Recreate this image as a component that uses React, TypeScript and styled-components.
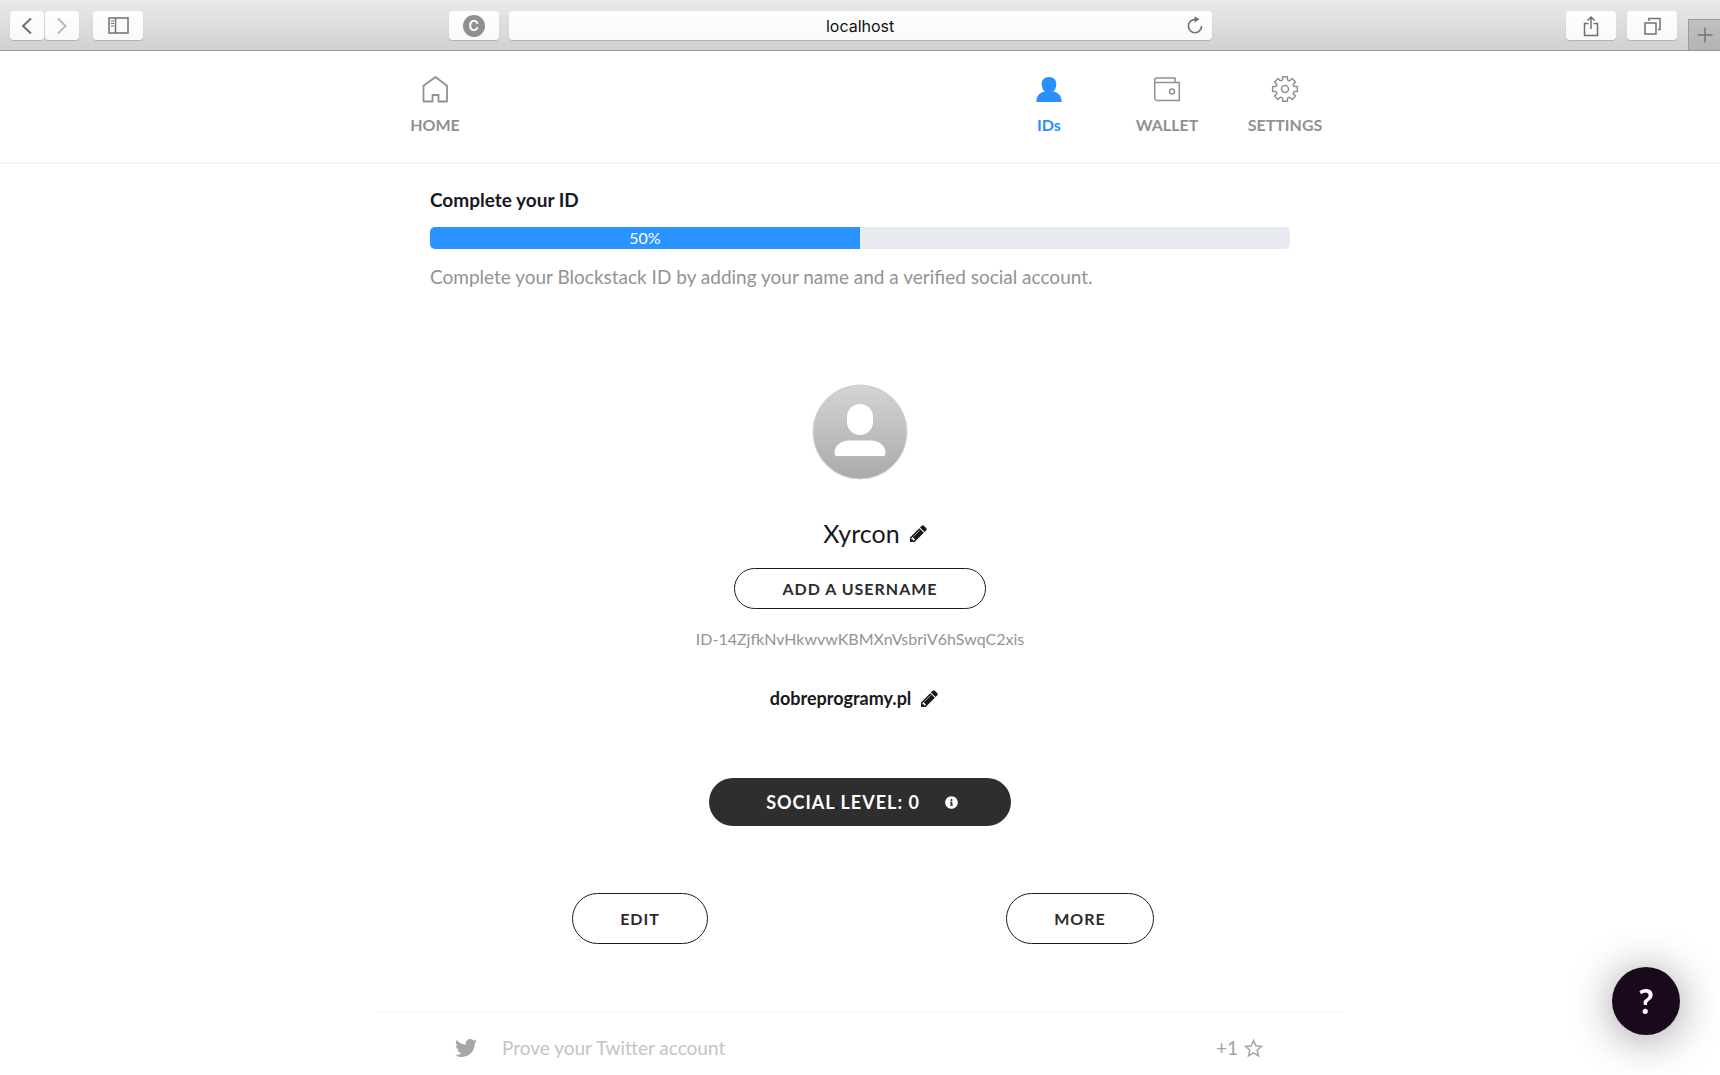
import React from "react";
import styled, { createGlobalStyle, css } from "styled-components";
import { FaTwitter, FaInfoCircle } from "react-icons/fa";

const Global = createGlobalStyle`
  *, *::before, *::after { box-sizing: border-box; }
  body {
    margin: 0;
    background: #fff;
    color: #18191f;
    font-family: Lato, "Open Sans", sans-serif;
    font-size: 16px;
    line-height: 24px;
  }
  button { font: inherit; color: inherit; cursor: pointer; }
  svg { display: block; flex: none; }
`;

/* ---------- browser toolbar ---------- */

const Toolbar = styled.header`
  display: grid;
  grid-template-columns: minmax(0, 45fr) minmax(0, 763px) minmax(0, 51fr);
  height: 51px;
  background: linear-gradient(#e9ebea, #d0d2d1);
  border-bottom: 1px solid #939594;
`;

const ToolGroup = styled.div<{ $gap: number; $end?: boolean }>`
  display: flex;
  align-items: flex-start;
  gap: ${(p) => p.$gap}px;
  padding-top: 11px;
  ${(p) => p.$end && css`justify-content: flex-end;`}
`;

const StartTools = styled(ToolGroup)`
  padding-left: 10px;
`;

const HistoryPair = styled.div`
  display: flex;
  gap: 1px;
`;

const field = css`
  border: 0;
  border-radius: 4px;
  background: linear-gradient(#fdfefd, #f8faf9);
  box-shadow: 0 1px 1px rgba(0, 0, 0, 0.18);
`;

const ToolButton = styled.button<{ $width: number }>`
  ${field}
  display: flex;
  align-items: center;
  justify-content: center;
  flex: none;
  width: ${(p) => p.$width}px;
  height: 29px;
  padding: 0;
  color: #6f7170;
`;

const Address = styled.div`
  position: relative;
  flex: 1;
`;

const AddressInput = styled.input`
  ${field}
  display: block;
  width: 100%;
  height: 29px;
  padding: 1px 32px 0;
  color: #111;
  font-family: Inter, sans-serif;
  font-size: 16px;
  text-align: center;
  outline: 0;
`;

const Reload = styled.button`
  position: absolute;
  top: 4px;
  right: 8px;
  padding: 0;
  border: 0;
  background: none;
  color: #6f7170;
`;

const SiteBadge = styled.span`
  width: 22px;
  height: 22px;
  border-radius: 50%;
  background: #8e908f;
  color: #fff;
  font-family: Inter, sans-serif;
  font-size: 14px;
  font-weight: 600;
  line-height: 22px;
`;

const NewTab = styled.button`
  display: flex;
  align-items: center;
  justify-content: center;
  width: 32px;
  height: 31px;
  margin-top: 8px;
  padding: 0;
  border: solid #9b9d9c;
  border-width: 1px 0 0 1px;
  background: linear-gradient(#bfc1c0, #b3b5b4);
  color: #6f7170;
`;

/* ---------- application navigation ---------- */

const NavBar = styled.nav`
  border-bottom: 2px solid #f4f4f5;
`;

const Container = styled.div`
  width: 100%;
  max-width: 968px;
  margin: 0 auto;
`;

const NavList = styled(Container)`
  display: flex;
  padding: 24px 0 25px;
`;

const NavLink = styled.a<{ $active?: boolean; $first?: boolean }>`
  display: flex;
  flex-direction: column;
  align-items: center;
  gap: 10px;
  width: 118px;
  margin-right: ${(p) => (p.$first ? "auto" : "0")};
  color: ${(p) => (p.$active ? "#2a91fc" : "#8f9193")};
  font-weight: 700;
  text-decoration: none;
`;

/* ---------- profile ---------- */

const Completion = styled(Container)`
  padding: 24px 54px 0;
`;

const Title = styled.h1`
  margin: 0 0 15px;
  font-size: 19px;
  font-weight: 700;
  line-height: 24px;
`;

const Track = styled.div`
  height: 22px;
  border-radius: 5px;
  overflow: hidden;
  background: #e7eaf0;
`;

const Fill = styled.div`
  height: 22px;
  background: #2a93ff;
  color: #fff;
  line-height: 21px;
  text-align: center;
`;

const Hint = styled.p`
  margin: 16px 0 0;
  color: #939393;
  font-size: 19px;
`;

const Profile = styled(Container)`
  display: flex;
  flex-direction: column;
  align-items: center;
  padding-top: 95px;
`;

const NameRow = styled.div`
  display: flex;
  align-items: center;
  gap: 10px;
  margin: 37px 0 19px;
  padding-left: 30px;
`;

const Name = styled.h2`
  margin: 0;
  font-size: 25px;
  font-weight: 400;
  line-height: 32px;
`;

const IconButton = styled.button`
  padding: 0;
  border: 0;
  background: none;
`;

const Outline = styled.button<{ $size: "small" | "large" }>`
  height: ${(p) => (p.$size === "small" ? 41 : 51)}px;
  padding: 0 47px;
  border: 1px solid #1c1c1d;
  border-radius: 26px;
  background: #fff;
  color: #2c2c2d;
  font-weight: 700;
  letter-spacing: 1px;
`;

const Identifier = styled.p`
  margin: 18px 0 0;
  color: #939393;
`;

const Bio = styled.div`
  display: flex;
  align-items: center;
  gap: 10px;
  margin-top: 35px;
  padding-right: 12px;
  font-size: 18px;
  font-weight: 700;
`;

const Level = styled.button`
  display: flex;
  align-items: center;
  gap: 25px;
  height: 48px;
  margin-top: 68px;
  padding: 0 53px 0 57px;
  border: 0;
  border-radius: 24px;
  background: #2e2e2f;
  color: #fff;
  font-size: 18px;
  font-weight: 700;
  letter-spacing: 1px;
`;

const Actions = styled.div`
  display: grid;
  grid-template-columns: 1fr 1fr;
  justify-items: center;
  width: 100%;
  margin-top: 67px;
  padding: 0 44px;
`;

const AccountLink = styled.a`
  display: flex;
  align-items: center;
  width: 100%;
  margin-top: 68px;
  padding: 23px 81px 14px 79px;
  border-top: 1px solid #f6f6f7;
  color: #c3c5c4;
  font-size: 19px;
  text-decoration: none;
`;

const AccountText = styled.span`
  flex: 1;
  padding-left: 25px;
`;

const Points = styled.span`
  display: flex;
  align-items: center;
  gap: 6px;
  color: #a6a8a7;
  font-weight: 500;
`;

const Help = styled.button`
  position: fixed;
  right: 40px;
  bottom: 40px;
  width: 68px;
  height: 68px;
  padding: 0;
  border: 0;
  border-radius: 50%;
  background: #1a081d;
  box-shadow: 0 4px 44px rgba(0, 0, 0, 0.4);
  color: #fff;
  font-size: 34px;
  font-weight: 700;
`;

/* ---------- drawings ---------- */

const Chevron = ({ flip }: { flip?: boolean }) => (
  <svg width="12" height="18" viewBox="0 0 12 18" fill="none" stroke={flip ? "#b9bbba" : "#6f7170"} strokeWidth="2">
    <path d={flip ? "M2 1.5L9.500 9L2 16.5" : "M10 1.5L2 9l8 7.500"} />
  </svg>
);

const SidebarIcon = () => (
  <svg width="21" height="17" viewBox="0 0 21 17" fill="none" stroke="currentColor">
    <path d="M1 1h19v15H1zM7.500 1v15" strokeWidth="1.5" />
    <path d="M3 4h3M3 6.500h3M3 9h3" />
  </svg>
);

const ReloadIcon = () => (
  <svg width="18" height="20" viewBox="0 0 18 20" fill="none" stroke="currentColor" strokeWidth="1.6">
    <path d="M9 4.500a6.600 6.600 0 1 0 6.600 6.600" />
    <path d="M8.500 1.200v6.200l5-3.100z" fill="currentColor" stroke="none" />
  </svg>
);

const ShareIcon = () => (
  <svg width="16" height="22" viewBox="0 0 16 22" fill="none" stroke="currentColor" strokeWidth="1.5">
    <path d="M5.500 8.500h-4v12h13v-12h-4M8 14V2M4.500 5.500L8 2l3.500 3.500" />
  </svg>
);

const TabsIcon = () => (
  <svg width="17" height="18" viewBox="0 0 17 18" fill="none" stroke="currentColor" strokeWidth="1.5">
    <path d="M1 6h11v11H1zM5 4V1.500h11v11h-2" />
  </svg>
);

const PlusIcon = () => (
  <svg width="16" height="16" viewBox="0 0 16 16" stroke="currentColor" strokeWidth="1.4">
    <path d="M8 .5v15M.5 8h15" />
  </svg>
);

const HomeIcon = () => (
  <svg width="28" height="28" viewBox="0 0 28 28" fill="none" stroke="currentColor" strokeWidth="1.8" strokeLinejoin="round">
    <path d="M2.500 10.800L14.500 2l11.500 8.800v15.700h-8.500v-6.500h-6v6.500h-9z" />
  </svg>
);

const PersonIcon = () => (
  <svg width="28" height="28" viewBox="0 0 28 28" fill="currentColor">
    <path d="M14 2c4.700 0 7.300 3 7.300 7 0 3.300-1.200 6-3 7.600 4.700 1 8.200 3.400 8.400 10.400H1.300c.2-7 3.700-9.400 8.400-10.400-1.800-1.600-3-4.300-3-7.600 0-4 2.600-7 7.300-7z" />
  </svg>
);

const WalletIcon = () => (
  <svg width="28" height="28" viewBox="0 0 28 28" fill="none" stroke="currentColor" strokeWidth="1.5">
    <path d="M22 7.500V3H4a2.300 2.300 0 0 0-2.300 2.300v17.400A2.800 2.800 0 0 0 4.500 25.500h21.800v-18H2" />
    <circle cx="19" cy="16.500" r="2.500" />
  </svg>
);

/* Eight square teeth joined by rounded valleys. */
const gear = (() => {
  const at = (angle: number, radius: number) =>
    `${(14 + radius * Math.sin(angle)).toFixed(2)} ${(14 - radius * Math.cos(angle)).toFixed(2)}`;
  let d = "";
  for (let i = 0; i < 8; i++) {
    const t = (i * Math.PI) / 4;
    d += `${i ? "L" : "M"}${at(t - 0.25, 9.8)}L${at(t - 0.19, 12.6)}L${at(t + 0.19, 12.6)}L${at(t + 0.25, 9.8)}`;
    d += `Q${at(t + Math.PI / 8, 8.4)} ${at(t + Math.PI / 4 - 0.25, 9.8)}`;
  }
  return `${d}Z`;
})();

const GearIcon = () => (
  <svg width="28" height="28" viewBox="0 0 28 28" fill="none" stroke="currentColor" strokeWidth="1.5" strokeLinejoin="round">
    <path d={gear} />
    <circle cx="14" cy="14" r="3.500" />
  </svg>
);

const Avatar = () => (
  <svg width="96" height="96" viewBox="0 0 96 96" role="img" aria-label="Profile picture">
    <defs>
      <linearGradient id="avatar" x1="0" y1="0" x2="0" y2="1">
        <stop offset="0" stopColor="#d3d5d4" />
        <stop offset="1" stopColor="#a9abaa" />
      </linearGradient>
    </defs>
    <circle cx="48" cy="48" r="47" fill="url(#avatar)" stroke="#d0d2d1" strokeWidth="1" />
    <rect x="35" y="20" width="26" height="31" rx="13" fill="#fff" />
    <path d="M37 56.500h22c8 0 14.500 5 14.500 12.500 0 2-.6 3-2.500 3H25c-1.900 0-2.500-1-2.500-3 0-7.500 6.500-12.500 14.500-12.500z" fill="#fff" />
  </svg>
);

const Pencil = () => (
  <svg width="17" height="17" viewBox="0 128 1536 1536" fill="#18191f">
    <path d="M363 1536l91-91-235-235-91 91v107h128v128h107zM886 608q0-22-22-22-10 0-17 7l-542 542q-7 7-7 17 0 22 22 22 10 0 17-7l542-542q7-7 7-17zM832 416l416 416-832 832h-416v-416zM1515 512q0 53-37 90l-166 166-416-416 166-165q36-38 90-38 53 0 91 38l235 234q37 39 37 91z" />
  </svg>
);

const Star = () => (
  <svg width="19" height="19" viewBox="0 0 18 18" fill="none" stroke="currentColor" strokeWidth="1.5">
    <path d="M9 1.500l2.200 5 5.300.5-4 3.600 1.200 5.400L9 13.200 4.300 16l1.200-5.400-4-3.600 5.300-.5z" />
  </svg>
);

export default function App() {
  const progress = 50;
  return (
    <>
      <Global />
      <Toolbar>
        <StartTools $gap={14}>
          <HistoryPair>
            <ToolButton $width={34} aria-label="Back"><Chevron /></ToolButton>
            <ToolButton $width={34} aria-label="Forward"><Chevron flip /></ToolButton>
          </HistoryPair>
          <ToolButton $width={50} aria-label="Show sidebar"><SidebarIcon /></ToolButton>
        </StartTools>
        <ToolGroup $gap={10}>
          <ToolButton $width={50} aria-label="Extension"><SiteBadge>C</SiteBadge></ToolButton>
          <Address>
            <AddressInput aria-label="Address" defaultValue="localhost" />
            <Reload aria-label="Reload"><ReloadIcon /></Reload>
          </Address>
        </ToolGroup>
        <ToolGroup $gap={11} $end>
          <ToolButton $width={50} aria-label="Share"><ShareIcon /></ToolButton>
          <ToolButton $width={50} aria-label="Show tabs"><TabsIcon /></ToolButton>
          <NewTab aria-label="New tab"><PlusIcon /></NewTab>
        </ToolGroup>
      </Toolbar>

      <NavBar>
        <NavList>
          <NavLink href="#home" $first><HomeIcon />HOME</NavLink>
          <NavLink href="#ids" $active><PersonIcon />IDs</NavLink>
          <NavLink href="#wallet"><WalletIcon />WALLET</NavLink>
          <NavLink href="#settings"><GearIcon />SETTINGS</NavLink>
        </NavList>
      </NavBar>

      <main>
        <Completion>
          <Title id="completion">Complete your ID</Title>
          <Track role="progressbar" aria-labelledby="completion" aria-valuenow={progress} aria-valuemin={0} aria-valuemax={100}>
            <Fill style={{ width: `${progress}%` }}>{progress}%</Fill>
          </Track>
          <Hint>Complete your Blockstack ID by adding your name and a verified social account.</Hint>
        </Completion>

        <Profile>
          <Avatar />
          <NameRow>
            <Name>Xyrcon</Name>
            <IconButton aria-label="Edit name"><Pencil /></IconButton>
          </NameRow>
          <Outline $size="small">ADD A USERNAME</Outline>
          <Identifier>ID-14ZjfkNvHkwvwKBMXnVsbriV6hSwqC2xis</Identifier>
          <Bio>
            dobreprogramy.pl
            <IconButton aria-label="Edit description"><Pencil /></IconButton>
          </Bio>
          <Level>
            SOCIAL LEVEL: 0
            <FaInfoCircle size={13} />
          </Level>
          <Actions>
            <Outline $size="large">EDIT</Outline>
            <Outline $size="large">MORE</Outline>
          </Actions>
          <AccountLink href="#twitter">
            <FaTwitter size={22} color="#a6a8a7" />
            <AccountText>Prove your Twitter account</AccountText>
            <Points>+1 <Star /></Points>
          </AccountLink>
        </Profile>
      </main>
      <Help aria-label="Help">?</Help>
    </>
  );
}
